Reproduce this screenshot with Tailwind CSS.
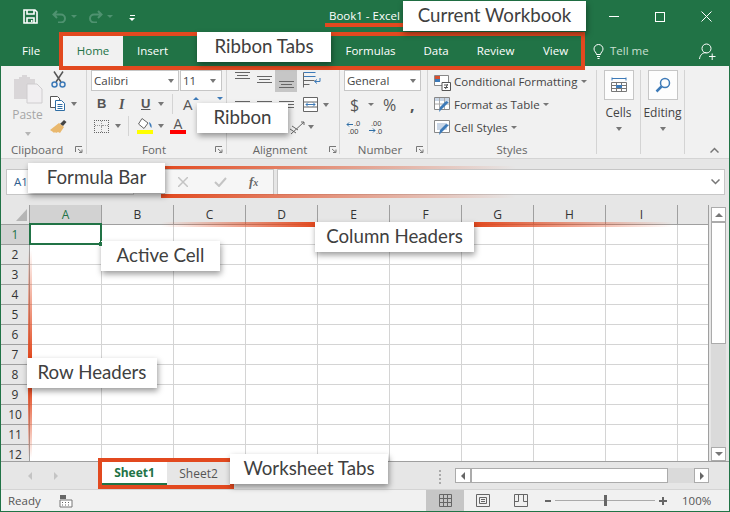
<!DOCTYPE html>
<html lang="en">
  <head>
    <meta charset="UTF-8" />
    <title>Book1 - Excel</title>
    <script src="https://cdn.jsdelivr.net/npm/@tailwindcss/browser@4"></script>
  </head>
  <body class="bg-white">
    <div class="relative w-[730px] h-[512px] overflow-hidden flex flex-col border-x border-b border-[#217346] bg-[#e6e6e6] text-[11.5px] text-[#444] font-['Open_Sans',sans-serif]">

      <!-- title bar -->
      <div class="h-[33px] shrink-0 -mx-px bg-[#217346] flex items-center text-white">
        <svg class="ml-[23px] w-[15px] h-[15px]" viewBox="0 0 15 15" fill="none" stroke="#fff" stroke-width="1.6"><path d="M1 1h11l2 2v11H1z"/><path d="M4 1v4h7V1M4 14v-5h7v5" /><path d="M8 11h1.5v2H8z" fill="#fff" stroke="none"/></svg>
        <svg class="ml-[14px] w-[15px] h-[13px]" viewBox="0 0 15 13" fill="none" stroke="#4f9270" stroke-width="2"><path d="M5 1 1.5 4.500 5 8M2 4.500h7a4 4 0 0 1 0 8H6"/></svg>
        <div class="ml-[4px] w-0 h-0 border-x-[3px] border-t-[3px] border-x-transparent border-t-[#4f9270]"></div>
        <svg class="ml-[11px] w-[15px] h-[13px]" viewBox="0 0 15 13" fill="none" stroke="#4f9270" stroke-width="2"><path d="M10 1l3.500 3.500L10 8M13 4.500H6a4 4 0 0 0 0 8h3"/></svg>
        <div class="ml-[4px] w-0 h-0 border-x-[3px] border-t-[3px] border-x-transparent border-t-[#4f9270]"></div>
        <div class="ml-[16px] flex flex-col items-center gap-[2px] mt-[2px]">
          <div class="w-[5px] h-px bg-white"></div>
          <div class="w-0 h-0 border-x-[3px] border-t-[3px] border-x-transparent border-t-white"></div>
        </div>
        <div class="ml-[194px] -mt-[2px] whitespace-nowrap">Book1 - Excel</div>
        <div class="ml-auto flex items-center">
          <div class="w-[10px] h-px bg-white mr-[36px]"></div>
          <div class="w-[10px] h-[10px] border border-white mr-[36px]"></div>
          <svg class="w-[11px] h-[11px] mr-[18px]" viewBox="0 0 11 11" stroke="#fff" fill="none"><path d="M.5.500l10 10M10.500.500l-10 10"/></svg>
        </div>
      </div>

      <!-- ribbon tabs -->
      <div class="h-[33px] shrink-0 -mx-px bg-[#217346] flex items-end text-white relative whitespace-nowrap">
        <div class="w-[63px] shrink-0 h-[30px] flex items-center pl-[22px]">File</div>
        <div class="w-[60px] shrink-0 h-[30px] flex items-center justify-center bg-[#f1f1f1] text-[#217346]">Home</div>
        <div class="w-[59px] shrink-0 h-[30px] flex items-center justify-center">Insert</div>
        <div class="ml-[164px] w-[49px] shrink-0 h-[30px] flex items-center justify-center">Formulas</div>
        <div class="ml-[29px] w-[24px] shrink-0 h-[30px] flex items-center justify-center">Data</div>
        <div class="ml-[29px] w-[37px] shrink-0 h-[30px] flex items-center justify-center">Review</div>
        <div class="ml-[29px] w-[25px] shrink-0 h-[30px] flex items-center justify-center">View</div>
        <div class="ml-[25px] shrink-0 h-[30px] flex items-center text-[#c9e0d2]">
          <svg class="w-[11px] h-[15px] mr-[6px]" viewBox="0 0 11 15" fill="none" stroke="#fff"><path d="M3.500 10.500C3.500 8.500 1 7.500 1 5a4.500 4.500 0 0 1 9 0c0 2.500-2.500 3.500-2.500 5.500zM4 12.500h3M4.500 14.500h2"/></svg>
          Tell me
        </div>
        <svg class="ml-[50px] mb-[6px] w-[17px] h-[17px] shrink-0" viewBox="0 0 17 17" fill="none" stroke="#fff"><circle cx="7.500" cy="5.500" r="4.500"/><path d="M.5 16c.5-4 3-6.500 7-6.500M10 13.500h6.500M13.200 10.500v6.500"/></svg>
      </div>

      <!-- ribbon -->
      <div class="h-[93px] shrink-0 bg-[#f1f1f1] border-b border-[#d4d4d4] flex pt-[4px] relative">

        <!-- clipboard -->
        <div class="w-[86px] h-[84px] border-r border-[#d4d4d4] flex flex-col shrink-0">
          <div class="h-[70px] shrink-0 flex">
            <div class="w-[49px] flex flex-col items-center pl-[4px]">
              <svg class="mt-[5px] w-[30px] h-[29px]" viewBox="0 0 30 29">
                <path d="M1 4h5V2h3V0h5v2h3v2h5v20H1z" fill="#d9d6d8"/>
                <path d="M14 9h10l5 5v14H14z" fill="#f1eff1" stroke="#cfcdcf"/>
              </svg>
              <div class="text-[#a6a6a6] mt-[2px] text-[12px]">Paste</div>
              <div class="mt-[8px] w-0 h-0 border-x-[3.500px] border-t-[4px] border-x-transparent border-t-[#b5b5b5]"></div>
            </div>
            <div class="flex flex-col">
              <svg class="w-[15px] h-[17px] ml-[1px] mt-[1px]" viewBox="0 0 15 17" fill="none">
                <path d="M3 .5 10 11M12 .5 5 11" stroke="#555" stroke-width="1.500"/>
                <circle cx="3.500" cy="13.500" r="2.500" stroke="#3d7ab8" stroke-width="1.500"/><circle cx="11.500" cy="13.500" r="2.500" stroke="#3d7ab8" stroke-width="1.500"/>
              </svg>
              <div class="flex items-center mt-[8px]">
                <svg class="w-[15px] h-[15px]" viewBox="0 0 15 15" fill="#fff" stroke="#555">
                  <path d="M.5.500h7l2 2v9h-9z"/><path d="M5.500 4.500h6l3 3v7h-9z" stroke="#2f6ea5"/><path d="M7.500 8.500h5M7.500 10.500h5M7.500 12.500h5" stroke="#2f6ea5"/>
                </svg>
                <div class="ml-[6px] w-0 h-0 border-x-[3.500px] border-t-[4px] border-x-transparent border-t-[#777]"></div>
              </div>
              <svg class="w-[17px] h-[15px] mt-[8px]" viewBox="0 0 17 15">
                <path d="M10 5 14 1l2.500 2-3.500 4z" fill="#444"/>
                <path d="M9 4l5 4-4 6-2-1-2 1-1-1-1 1-1-1-3-2z" fill="#e9b86e"/>
              </svg>
            </div>
          </div>
          <div class="mt-[3px] h-[14px] shrink-0 flex items-center pl-[10px] relative text-[#666]">
            Clipboard
            <svg class="absolute left-[74px] top-[3px] w-[8px] h-[7px]" viewBox="0 0 8 7" fill="none" stroke="#777"><path d="M.5 6V.5H7M3 3l4 3.500M7 3.500v3H4"/></svg>
          </div>
        </div>

        <!-- font -->
        <div class="w-[140px] h-[84px] border-r border-[#d4d4d4] flex flex-col shrink-0">
          <div class="h-[22px] shrink-0 flex gap-[1px] pl-[4px]">
            <div class="w-[88px] h-[21px] bg-white border border-[#c6c6c6] flex items-center pl-[2px] justify-between pr-[4px]">Calibri<span class="w-0 h-0 border-x-[3.500px] border-t-[4px] border-x-transparent border-t-[#777]"></span></div>
            <div class="w-[42px] h-[21px] bg-white border border-[#c6c6c6] flex items-center pl-[2px] justify-between pr-[5px]">11<span class="w-0 h-0 border-x-[3.500px] border-t-[4px] border-x-transparent border-t-[#777]"></span></div>
          </div>
          <div class="h-[22px] shrink-0 flex items-center pl-[10px] mt-[1px] relative">
            <span class="w-[22px] font-['Liberation_Sans',sans-serif] font-bold text-[13px] text-[#555]">B</span>
            <span class="w-[22px] font-['Liberation_Serif',serif] italic font-bold text-[14px] text-[#555]">I</span>
            <span class="w-[16px] font-['Liberation_Sans',sans-serif] font-bold text-[13px] text-[#555] underline">U</span>
            <div class="ml-[1px] w-0 h-0 border-x-[3.500px] border-t-[4px] border-x-transparent border-t-[#777]"></div>
            <div class="ml-[8px] w-px h-[20px] bg-[#d4d4d4]"></div>
            <span class="ml-[10px] text-[15px] text-[#555]">A</span>
            <div class="mb-[12px] w-0 h-0 border-x-[3px] border-b-[3px] border-x-transparent border-b-[#3d7ab8]"></div>
            <div class="ml-[18px] mb-[12px] w-0 h-0 border-x-[3px] border-t-[3px] border-x-transparent border-t-[#3d7ab8]"></div>
          </div>
          <div class="h-[22px] shrink-0 flex items-center pl-[7px]">
            <div class="w-[15px] h-[13px] border border-dotted border-[#666] grid grid-cols-2 grid-rows-2">
              <div class="border-r border-b border-dotted border-[#999]"></div><div class="border-b border-dotted border-[#999]"></div>
              <div class="border-r border-dotted border-[#999]"></div><div></div>
            </div>
            <div class="ml-[6px] w-0 h-0 border-x-[3.500px] border-t-[4px] border-x-transparent border-t-[#777]"></div>
            <div class="ml-[7px] w-px h-[20px] bg-[#d4d4d4]"></div>
            <div class="ml-[8px] flex flex-col w-[16px]">
              <svg class="w-[16px] h-[12px]" viewBox="0 0 16 12" fill="none"><path d="M5 .5 11 5l-4 5.500L1.500 6z" fill="#fff" stroke="#666"/><path d="M12 4c2 1 3 3 2.500 6-1.500-1-2-3-2.500-6z" fill="#3d7ab8"/></svg>
              <div class="h-[4px] bg-[#ffff00]"></div>
            </div>
            <div class="ml-[5px] w-0 h-0 border-x-[3.500px] border-t-[4px] border-x-transparent border-t-[#777]"></div>
            <div class="ml-[6px] flex flex-col items-center w-[16px]">
              <span class="text-[14px] leading-[12px] text-[#555]">A</span>
              <div class="w-full h-[4px] bg-[#ff0000]"></div>
            </div>
          </div>
          <div class="mt-[6px] h-[14px] shrink-0 flex items-center justify-center relative text-[#666] pr-[5px]">
            Font
            <svg class="absolute left-[128px] top-[3px] w-[8px] h-[7px]" viewBox="0 0 8 7" fill="none" stroke="#777"><path d="M.5 6V.5H7M3 3l4 3.500M7 3.500v3H4"/></svg>
          </div>
        </div>

        <!-- alignment -->
        <div class="w-[113px] h-[84px] border-r border-[#d4d4d4] flex flex-col shrink-0">
          <div class="h-[22px] shrink-0 flex items-start pl-[8px]">
            <svg class="w-[15px] h-[8px] mt-[2px]" viewBox="0 0 15 8" stroke="#666"><path d="M0 .5h15M2 3.500h11M0 6.500h15"/></svg>
            <svg class="ml-[7px] w-[15px] h-[8px] mt-[6px]" viewBox="0 0 15 8" stroke="#666"><path d="M0 .5h15M2 3.500h11M0 6.500h15"/></svg>
            <div class="ml-[3px] w-[22px] h-[22px] bg-[#c6c6c6] flex items-end justify-center pb-[3px]">
              <svg class="w-[15px] h-[8px]" viewBox="0 0 15 8" stroke="#666"><path d="M0 .5h15M2 3.500h11M0 6.500h15"/></svg>
            </div>
            <svg class="ml-[6px] mt-[2px] w-[18px] h-[16px]" viewBox="0 0 18 16" fill="none" stroke="#666"><path d="M.5.500h12M.5 4.500h12" stroke="#3d7ab8"/><path d="M.5 8.500h11M.5 12.500h6M.5.500v15"/><path d="M17 6v3.500h-5M14 7.500l-2.500 2 2.500 2" stroke="#3d7ab8"/></svg>
          </div>
          <div class="h-[23px] shrink-0 flex items-center pl-[8px] mt-[1px]">
            <svg class="w-[15px] h-[8px]" viewBox="0 0 15 8" stroke="#666"><path d="M0 .5h15M0 3.500h9M0 6.500h15"/></svg>
            <svg class="ml-[7px] w-[15px] h-[8px]" viewBox="0 0 15 8" stroke="#666"><path d="M0 .5h15M3 3.500h9M0 6.500h15"/></svg>
            <svg class="ml-[7px] w-[15px] h-[8px]" viewBox="0 0 15 8" stroke="#666"><path d="M0 .5h15M6 3.500h9M0 6.500h15"/></svg>
            <svg class="ml-[9px] w-[15px] h-[15px]" viewBox="0 0 15 15" fill="#fff" stroke="#666"><path d="M.5.500h14v14H.5zM.5 5h14M.5 10h14"/><path d="M3 7.500h9" stroke="#3d7ab8"/><path d="M5 5.500l-2 2 2 2M10 5.500l2 2-2 2" stroke="#3d7ab8" fill="none"/></svg>
            <div class="ml-[5px] w-0 h-0 border-x-[3.500px] border-t-[4px] border-x-transparent border-t-[#777]"></div>
          </div>
          <div class="h-[22px] shrink-0 flex items-center pl-[62px]">
            <svg class="w-[16px] h-[15px]" viewBox="0 0 16 15" fill="none" stroke="#666"><path d="M1 9 7 13M3 6l6 4M2 14 15 2M15 2h-3M15 2v3"/></svg>
            <div class="ml-[3px] w-0 h-0 border-x-[3.500px] border-t-[4px] border-x-transparent border-t-[#777]"></div>
          </div>
          <div class="mt-[5px] h-[14px] shrink-0 flex items-center justify-center relative text-[#666] pr-[6px]">
            Alignment
            <svg class="absolute left-[102px] top-[3px] w-[8px] h-[7px]" viewBox="0 0 8 7" fill="none" stroke="#777"><path d="M.5 6V.5H7M3 3l4 3.500M7 3.500v3H4"/></svg>
          </div>
        </div>

        <!-- number -->
        <div class="w-[88px] h-[84px] border-r border-[#d4d4d4] flex flex-col shrink-0">
          <div class="h-[22px] shrink-0 pl-[4px]">
            <div class="w-[77px] h-[21px] bg-white border border-[#c6c6c6] flex items-center pl-[2px] justify-between pr-[4px]">General<span class="w-0 h-0 border-x-[3.500px] border-t-[4px] border-x-transparent border-t-[#777]"></span></div>
          </div>
          <div class="h-[23px] shrink-0 flex items-center pl-[10px] mt-[1px] text-[16px] text-[#555]">
            <span class="w-[14px]">$</span>
            <div class="ml-[4px] w-0 h-0 border-x-[3px] border-t-[3px] border-x-transparent border-t-[#777]"></div>
            <span class="ml-[9px] w-[20px]">%</span>
            <span class="ml-[7px] font-bold">,</span>
          </div>
          <div class="h-[21px] shrink-0 flex items-center pl-[6px] text-[#444]">
            <svg class="w-[16px] h-[16px]" viewBox="0 0 16 16" fill="none">
              <path d="M1 5.500h6M3 3.500l-2 2 2 2" stroke="#2f6ea5"/>
              <text x="8" y="7" font-size="7.500" fill="#444" font-family="Liberation Sans">.0</text>
              <text x="2" y="15" font-size="7.500" fill="#444" font-family="Liberation Sans">.00</text>
            </svg>
            <svg class="ml-[6px] w-[16px] h-[16px]" viewBox="0 0 16 16" fill="none">
              <path d="M1 11.500h6M5 9.500l2 2-2 2" stroke="#2f6ea5"/>
              <text x="3" y="7" font-size="7.500" fill="#444" font-family="Liberation Sans">.00</text>
              <text x="8" y="15" font-size="7.500" fill="#444" font-family="Liberation Sans">.0</text>
            </svg>
          </div>
          <div class="mt-[6px] h-[14px] shrink-0 flex items-center justify-center relative text-[#666] pr-[7px]">
            Number
            <svg class="absolute left-[76px] top-[3px] w-[8px] h-[7px]" viewBox="0 0 8 7" fill="none" stroke="#777"><path d="M.5 6V.5H7M3 3l4 3.500M7 3.500v3H4"/></svg>
          </div>
        </div>

        <!-- styles -->
        <div class="w-[169px] h-[84px] border-r border-[#d4d4d4] flex flex-col shrink-0 pl-[6px]">
          <div class="h-[23px] shrink-0 flex items-center">
            <svg class="w-[17px] h-[17px] mt-[1px]" viewBox="0 0 17 17" fill="none"><path d="M.5 1.500h14v10H.5z" fill="#fff" stroke="#888"/><path d="M1 2h5v3H1z" fill="#d9502e"/><path d="M1 5h5v3H1z" fill="#3d7ab8"/><path d="M8 8.500h8.500v8H8z" fill="#fff" stroke="#555"/><path d="M10 11h4M10 13.500h4M13.500 10l-2 5" stroke="#555"/></svg>
            <span class="ml-[3px] whitespace-nowrap">Conditional Formatting</span>
            <div class="ml-[4px] w-0 h-0 border-x-[3px] border-t-[3px] border-x-transparent border-t-[#777]"></div>
          </div>
          <div class="h-[23px] shrink-0 flex items-center">
            <svg class="w-[17px] h-[17px]" viewBox="0 0 17 17" fill="none"><path d="M.5 1.500h15v12H.5z" fill="#fff" stroke="#888"/><path d="M1 2h14v3H1z" fill="#c9d6e6"/><path d="M5.500 2v11M10.500 2v11M1 8h14" stroke="#aaa"/><path d="M15 6l-6 6-4 4 1-5 6-6z" fill="#3d7ab8"/></svg>
            <span class="ml-[3px] whitespace-nowrap">Format as Table</span>
            <div class="ml-[3px] w-0 h-0 border-x-[3px] border-t-[3px] border-x-transparent border-t-[#777]"></div>
          </div>
          <div class="h-[23px] shrink-0 flex items-center">
            <svg class="w-[17px] h-[17px]" viewBox="0 0 17 17" fill="none"><path d="M.5 1.500h15v12H.5z" fill="#fff" stroke="#888"/><path d="M3 4h10v7H3z" fill="#c9d6e6"/><path d="M15 6l-6 6-4 4 1-5 6-6z" fill="#3d7ab8"/></svg>
            <span class="ml-[3px] whitespace-nowrap">Cell Styles</span>
            <div class="ml-[3px] w-0 h-0 border-x-[3px] border-t-[3px] border-x-transparent border-t-[#777]"></div>
          </div>
          <div class="mt-[4px] h-[14px] shrink-0 flex items-center justify-center text-[#666] pr-[6px]">Styles</div>
        </div>

        <!-- cells -->
        <div class="w-[44px] h-[84px] border-r border-[#d4d4d4] flex flex-col items-center shrink-0">
          <div class="w-[30px] h-[30px] bg-[#fdfdfd] border border-[#c6c6c6] flex items-center justify-center">
            <svg class="w-[16px] h-[17px]" viewBox="0 0 16 17" fill="none"><path d="M1 1.500h14M1 .5v3M15 .5v3" stroke="#3d7ab8"/><path d="M.5 5.500h15v9H.5zM.5 8.500h15M.5 11.500h15M5.500 5.500v9M10.500 5.500v9" stroke="#777"/><path d="M5 8h6v3H5z" fill="#3d7ab8"/></svg>
          </div>
          <div class="mt-[5px] leading-[16px] text-[12px]">Cells</div>
          <div class="mt-[6px] w-0 h-0 border-x-[3.500px] border-t-[4px] border-x-transparent border-t-[#777]"></div>
        </div>

        <!-- editing -->
        <div class="w-[44px] h-[84px] border-r border-[#d4d4d4] flex flex-col items-center shrink-0">
          <div class="w-[30px] h-[30px] bg-[#fdfdfd] border border-[#c6c6c6] flex items-center justify-center">
            <svg class="w-[16px] h-[16px]" viewBox="0 0 16 16" fill="none" stroke="#3d7ab8"><circle cx="10" cy="6" r="4.500" stroke-width="1.500"/><path d="M6.500 9.500 1.500 14.500" stroke-width="2.500"/></svg>
          </div>
          <div class="mt-[5px] leading-[16px] text-[12px]">Editing</div>
          <div class="mt-[6px] w-0 h-0 border-x-[3.500px] border-t-[4px] border-x-transparent border-t-[#777]"></div>
        </div>

        <svg class="absolute left-[709px] top-[81px] w-[9px] h-[6px]" viewBox="0 0 9 6" fill="none" stroke="#777" stroke-width="1.500"><path d="M.5 5.500l4-4 4 4"/></svg>
      </div>

      <!-- formula bar -->
      <div class="h-[46px] shrink-0 flex pt-[10px] pl-[5px]">
        <div class="w-[128px] h-[26px] bg-white border border-[#c6c6c6] flex items-center pl-[7px] text-[#2f5f8f]">A1</div>
        <div class="ml-[30px] w-[110px] h-[26px] bg-[#f6f6f6] border border-[#c6c6c6] flex items-center text-[#bbb]">
          <svg class="ml-[13px] w-[10px] h-[10px]" viewBox="0 0 10 10" stroke="#c4c4c4" stroke-width="1.500"><path d="M0 0l10 10M10 0 0 10"/></svg>
          <svg class="ml-[26px] w-[13px] h-[10px]" viewBox="0 0 13 10" fill="none" stroke="#c4c4c4" stroke-width="2"><path d="M1 5l4 4 7-8"/></svg>
          <span class="ml-[22px] font-['Liberation_Serif',serif] italic font-bold text-[13px] text-[#666]">f<span class="text-[10px]">x</span></span>
        </div>
        <div class="ml-[3px] w-[448px] h-[26px] bg-white border border-[#c6c6c6] flex items-center justify-end pr-[4px]">
          <svg class="w-[9px] h-[6px]" viewBox="0 0 9 6" fill="none" stroke="#777" stroke-width="1.500"><path d="M.5.500l4 4 4-4"/></svg>
        </div>
      </div>

      <!-- sheet -->
      <div class="flex-1 flex min-h-0 text-[12px]">
        <div id="sheet" class="w-[708px] flex flex-col shrink-0 overflow-hidden border-r border-[#9f9f9f]"></div>
        <div class="flex-1 pl-[2px] pt-[2px] flex flex-col">
          <div class="w-[15px] h-[15px] bg-white border border-[#ababab] flex items-center justify-center">
            <div class="w-0 h-0 border-x-[4px] border-b-[4px] border-x-transparent border-b-[#777]"></div>
          </div>
          <div class="w-[15px] flex-1 bg-[#dadada] flex flex-col">
            <div class="h-[122px] bg-white border border-[#ababab]"></div>
            <div class="flex-1"></div>
            <div class="h-[14px] bg-white border border-[#ababab] flex items-center justify-center">
              <div class="w-0 h-0 border-x-[4px] border-t-[4px] border-x-transparent border-t-[#777]"></div>
            </div>
          </div>
        </div>
      </div>

      <!-- sheet tabs -->
      <div class="h-[28px] shrink-0 border-t border-[#9f9f9f] flex items-start">
        <div class="w-[101px] h-[27px] flex items-center pl-[27px] gap-[22px]">
          <div class="w-0 h-0 border-y-[4px] border-r-[4px] border-y-transparent border-r-[#c4c4c4]"></div>
          <div class="w-0 h-0 border-y-[4px] border-l-[4px] border-y-transparent border-l-[#c4c4c4]"></div>
        </div>
        <div class="w-[65px] h-[23px] bg-white border-b-2 border-[#217346] flex items-center justify-center font-bold text-[#217346] text-[12px]">Sheet1</div>
        <div class="w-[63px] h-[23px] flex items-center justify-center text-[#555] text-[12px]">Sheet2</div>
        <div class="ml-[209px] mt-[8px] flex flex-col gap-[2px]">
          <div class="w-[2px] h-[2px] bg-[#aaa]"></div>
          <div class="w-[2px] h-[2px] bg-[#aaa]"></div>
          <div class="w-[2px] h-[2px] bg-[#aaa]"></div>
          <div class="w-[2px] h-[2px] bg-[#aaa]"></div>
        </div>
        <div class="ml-[14px] mt-[6px] w-[254px] h-[15px] flex bg-[#dadada]">
          <div class="w-[16px] h-[15px] bg-white border border-[#ababab] flex items-center justify-center"><div class="w-0 h-0 border-y-[4px] border-r-[4px] border-y-transparent border-r-[#666]"></div></div>
          <div class="w-[197px] h-[15px] bg-white border border-[#ababab]"></div>
          <div class="ml-auto w-[15px] h-[15px] bg-white border border-[#ababab] flex items-center justify-center"><div class="w-0 h-0 border-y-[4px] border-l-[4px] border-y-transparent border-l-[#666]"></div></div>
        </div>
      </div>

      <!-- status bar -->
      <div class="h-[22px] shrink-0 bg-[#f1f1f1] border-t border-[#d4d4d4] flex items-center text-[#555]">
        <span class="ml-[7px] w-[51px]">Ready</span>
        <svg class="w-[14px] h-[14px]" viewBox="0 0 14 14" fill="#666"><path d="M1 1h6v4H1z"/><path d="M1 6h12v7H1z" fill="#fff" stroke="#777"/><path d="M3 8h1v1H3zM6 8h1v1H6zM9 8h1v1H9zM3 10.500h1v1H3zM6 10.500h1v1H6zM9 10.500h1v1H9z"/></svg>
        <div class="ml-[353px] w-[38px] h-[21px] bg-[#c6c6c6] flex items-center justify-center">
          <svg class="w-[13px] h-[13px]" viewBox="0 0 13 13" fill="none" stroke="#666"><path d="M.5.500h12v12H.5zM.5 4.500h12M.5 8.500h12M4.500.500v12M8.500.500v12"/></svg>
        </div>
        <svg class="ml-[12px] w-[14px] h-[13px]" viewBox="0 0 14 13" fill="none" stroke="#666"><path d="M.5.500h13v12H.5zM3.500 3.500h7v6h-7zM5 5.500h4M5 7.500h4"/></svg>
        <svg class="ml-[24px] w-[14px] h-[13px]" viewBox="0 0 14 13" fill="none" stroke="#666"><path d="M.5.500h13v12H.5zM.5 7.500h4M4.500.500v7M9.500.500v7M9.500 7.500h4"/></svg>
        <div class="ml-[17px] w-[6px] h-[2px] bg-[#666]"></div>
        <div class="ml-[4px] w-[100px] h-px bg-[#aaa] relative">
          <div class="absolute left-[49px] -top-[5px] w-[3px] h-[11px] bg-[#666]"></div>
        </div>
        <svg class="ml-[4px] w-[8px] h-[8px]" viewBox="0 0 8 8" stroke="#666" stroke-width="2"><path d="M0 4h8M4 0v8"/></svg>
        <span class="ml-[15px]">100%</span>
      </div>

      <!-- annotations -->
      <div class="absolute left-[324px] top-[23px] w-[80px] h-[4px] bg-[#e2491f]"></div>
      <div class="absolute left-[58px] top-[32px] w-[526px] h-[38px] border-4 border-[#e2491f]"></div>
      <div class="absolute left-[97px] top-[458px] w-[136px] h-[31px] border-4 border-[#e2491f]"></div>
      <div class="absolute left-[160px] top-[166px] w-[355px] h-[3px] bg-linear-to-r from-[#e2491f] to-transparent"></div>
      <div class="absolute left-[160px] top-[194px] w-[355px] h-[4px] bg-linear-to-r from-[#e2491f] to-transparent"></div>
      <div class="absolute left-[160px] top-[222px] w-[155px] h-[5px] bg-linear-to-l from-[#e2491f] to-transparent"></div>
      <div class="absolute left-[472px] top-[222px] w-[200px] h-[5px] bg-linear-to-r from-[#e2491f] to-transparent"></div>
      <div class="absolute left-[27px] top-[250px] w-[4px] h-[108px] bg-linear-to-t from-[#e2491f] to-transparent"></div>
      <div class="absolute left-[27px] top-[388px] w-[4px] h-[70px] bg-linear-to-b from-[#e2491f] to-transparent"></div>

      <div class="absolute left-[402px] top-[1px] w-[183px] h-[30px] pb-[2px] bg-white shadow-[1px_3px_6px_rgba(0,0,0,0.4)] flex items-center justify-center text-[18.7px] text-[#404040] font-['Lato',sans-serif] whitespace-nowrap">Current Workbook</div>
      <div class="absolute left-[196px] top-[32px] w-[134px] h-[30px] pb-[2px] bg-white shadow-[1px_3px_6px_rgba(0,0,0,0.4)] flex items-center justify-center text-[18.7px] text-[#404040] font-['Lato',sans-serif] whitespace-nowrap">Ribbon Tabs</div>
      <div class="absolute left-[196px] top-[103px] w-[91px] h-[30px] pb-[2px] bg-white shadow-[1px_3px_6px_rgba(0,0,0,0.4)] flex items-center justify-center text-[18.7px] text-[#404040] font-['Lato',sans-serif] whitespace-nowrap">Ribbon</div>
      <div class="absolute left-[27px] top-[163px] w-[137px] h-[30px] pb-[2px] bg-white shadow-[1px_3px_6px_rgba(0,0,0,0.4)] flex items-center justify-center text-[18.7px] text-[#404040] font-['Lato',sans-serif] whitespace-nowrap">Formula Bar</div>
      <div class="absolute left-[100px] top-[241px] w-[119px] h-[30px] pb-[2px] bg-white shadow-[1px_3px_6px_rgba(0,0,0,0.4)] flex items-center justify-center text-[18.7px] text-[#404040] font-['Lato',sans-serif] whitespace-nowrap">Active Cell</div>
      <div class="absolute left-[314px] top-[222px] w-[159px] h-[30px] pb-[2px] bg-white shadow-[1px_3px_6px_rgba(0,0,0,0.4)] flex items-center justify-center text-[18.7px] text-[#404040] font-['Lato',sans-serif] whitespace-nowrap">Column Headers</div>
      <div class="absolute left-[26px] top-[358px] w-[130px] h-[30px] pb-[2px] bg-white shadow-[1px_3px_6px_rgba(0,0,0,0.4)] flex items-center justify-center text-[18.7px] text-[#404040] font-['Lato',sans-serif] whitespace-nowrap">Row Headers</div>
      <div class="absolute left-[229px] top-[454px] w-[158px] h-[30px] pb-[2px] bg-white shadow-[1px_3px_6px_rgba(0,0,0,0.4)] flex items-center justify-center text-[18.7px] text-[#404040] font-['Lato',sans-serif] whitespace-nowrap">Worksheet Tabs</div>
    </div>

    <script>
      const cols = ["A", "B", "C", "D", "E", "F", "G", "H", "I"];
      const sheet = document.getElementById("sheet");

      // column headers
      let html = `
        <div class="h-[20px] shrink-0 flex border-b border-[#9f9f9f]">
          <div class="w-[29px] shrink-0 border-r border-[#9f9f9f] relative">
            <div class="absolute left-[15px] top-[4px] w-[11px] h-[12px] bg-[#b5b5b5] [clip-path:polygon(100%_0,100%_100%,0_100%)]"></div>
          </div>
          ${cols
            .map((c, i) =>
              i === 0
                ? `<div class="w-[72px] shrink-0 bg-[#d2d2d2] border-r border-[#9f9f9f] flex items-center justify-center text-[#217346]">${c}</div>`
                : `<div class="w-[72px] shrink-0 border-r border-[#9f9f9f] flex items-center justify-center text-[#333]">${c}</div>`
            )
            .join("")}
        </div>
      `;

      // rows
      for (let r = 1; r <= 12; r++) {
        html += `
          <div class="h-[20px] shrink-0 flex bg-white">
            <div class="w-[29px] shrink-0 border-r border-b pt-[1px] flex items-center justify-center ${
              r === 1
                ? "bg-[#d2d2d2] text-[#217346] border-r-[#9f9f9f] border-b-[#9f9f9f]"
                : "bg-[#e6e6e6] text-[#333] border-r-[#9f9f9f] border-b-[#9f9f9f]"
            }">${r}</div>
            ${cols
              .map(
                (c) =>
                  `<div class="w-[72px] shrink-0 border-r border-b border-[#d4d4d4] relative">${
                    r === 1 && c === "A"
                      ? `<div class="absolute -left-px -top-[2px] w-[73px] h-[22px] border-2 border-[#217346]"></div><div class="absolute left-[69px] top-[17px] w-[3px] h-[4px] bg-[#217346] z-10"></div>`
                      : ""
                  }</div>`
              )
              .join("")}
            <div class="flex-1 border-b border-[#d4d4d4]"></div>
          </div>
        `;
      }
      sheet.innerHTML = html;
    </script>
  </body>
</html>
